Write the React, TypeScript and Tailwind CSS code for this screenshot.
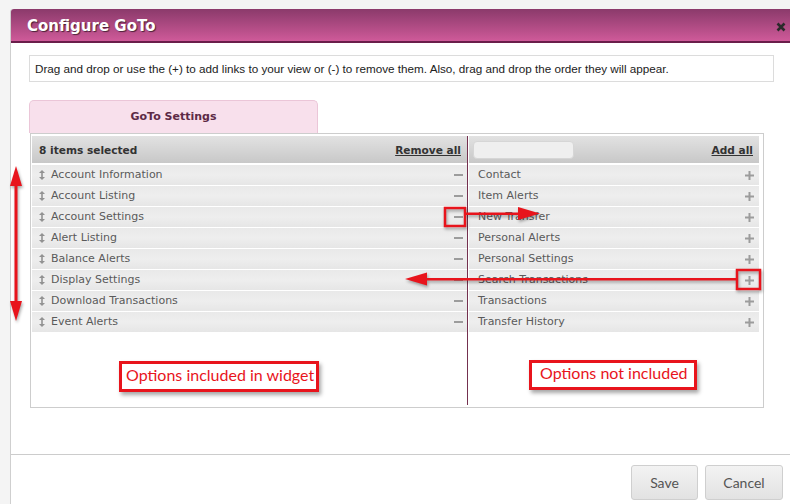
const selected = [
  "Account Information",
  "Account Listing",
  "Account Settings",
  "Alert Listing",
  "Balance Alerts",
  "Display Settings",
  "Download Transactions",
  "Event Alerts",
];

const available = [
  "Contact",
  "Item Alerts",
  "New Transfer",
  "Personal Alerts",
  "Personal Settings",
  "Search Transactions",
  "Transactions",
  "Transfer History",
];

function Handle() {
  return (
    <svg width="6" height="10" viewBox="0 0 6 10" className="shrink-0">
      <polygon points="3,0 0,3 6,3" fill="#929292" />
      <rect x="2.2" y="3" width="1.6" height="4" fill="#929292" />
      <polygon points="0,7 6,7 3,10" fill="#929292" />
    </svg>
  );
}

function Minus() {
  return <span className="block w-[9px] h-[2px] bg-[#9c9c9c]" />;
}

function Plus() {
  return (
    <svg width="9" height="9" viewBox="0 0 9 9">
      <rect x="0" y="3.5" width="9" height="2" fill="#9c9c9c" />
      <rect x="3.5" y="0" width="2" height="9" fill="#9c9c9c" />
    </svg>
  );
}

const row =
  "h-[20px] mb-[1px] flex items-center bg-gradient-to-b from-[#e9e9e9] via-[#eeeeee] to-[#e6e6e6] text-[11px] text-[#5a5a5a]";

function Callout({ children, className }: { children: string; className: string }) {
  return (
    <div
      className={`border-[3px] border-[#e8141c] shadow-[2px_3px_4px_rgba(0,0,0,0.35)] flex items-center pb-[4px] text-[16px] text-[#e8141c] font-['Lato',sans-serif] ${className}`}
    >
      {children}
    </div>
  );
}

function Annotations() {
  return (
    <svg
      width="790"
      height="504"
      className="absolute left-0 top-0 pointer-events-none"
      style={{ filter: "drop-shadow(1px 2px 1.5px rgba(0,0,0,0.35))" }}
    >
      {/* up/down reorder arrow */}
      <rect x="14.5" y="180" width="3" height="126" fill="#e8141c" />
      <polygon points="16,166 10,186 22,186" fill="#e8141c" />
      <polygon points="16,321 10,301 22,301" fill="#e8141c" />

      {/* remove: minus box -> right column */}
      <rect x="445" y="208" width="20" height="18" fill="none" stroke="#e8141c" strokeWidth="2.5" />
      <rect x="466" y="212.5" width="56" height="2.5" fill="#e8141c" />
      <polygon points="540,213.5 518,207 518,220" fill="#e8141c" />

      {/* add: plus box -> left column */}
      <rect x="737" y="270" width="23" height="19" fill="none" stroke="#e8141c" strokeWidth="2.5" />
      <rect x="424" y="278" width="313" height="2.5" fill="#e8141c" />
      <polygon points="405,279 427,272.5 427,285.5" fill="#e8141c" />
    </svg>
  );
}

export default function App() {
  return (
    <div className="relative w-[790px] h-[504px] overflow-hidden bg-[#f4f4f4] font-['DejaVu_Sans',Verdana,sans-serif]">
      <div className="ml-[10px] mt-[9px] w-[790px] h-[600px] bg-white border-l border-[#cfcfcf] rounded-tl-[3px]">
        {/* title bar */}
        <div className="h-[34px] flex items-center justify-between pt-[3px] pl-[16px] pr-[14px] bg-gradient-to-b from-[#8b3a6b] to-[#cf5a99] border-b-2 border-[#6a1d4a] rounded-tl-[3px]">
          <span className="text-white font-bold text-[15px] [text-shadow:1px_1px_1px_rgba(0,0,0,0.6)]">
            Configure GoTo
          </span>
          <svg width="10" height="10" viewBox="0 0 10 10">
            <path d="M1.5 1.5 L8.5 8.5 M8.5 1.5 L1.5 8.5" stroke="#2a2a2a" strokeWidth="2.6" />
          </svg>
        </div>

        <div className="pl-[18px]">
          <div className="mt-[12px] w-[745px] h-[27px] border border-[#dcdcdc] flex items-center pl-[5px] text-[11.7px] text-[#222] font-['Liberation_Sans',Arial,sans-serif]">
            Drag and drop or use the (+) to add links to your view or (-) to remove them. Also, drag and drop the order they will appear.
          </div>

          {/* tab */}
          <div className="mt-[18px] w-[289px] h-[33px] pt-[1px] rounded-t-[5px] bg-[#f8e0ec] border border-b-0 border-[#ebc6d8] flex items-center justify-center text-[11px] font-bold text-[#5c2a46]">
            GoTo Settings
          </div>

          {/* lists */}
          <div className="ml-[1px] w-[734px] h-[275px] border border-[#cdcdcd] pt-[2px] pl-[1px] pr-[4px] flex">
            <div className="w-[435px]">
              <div className="h-[27px] mb-[2px] flex items-center justify-between pt-[2px] pl-[7px] pr-[6px] bg-gradient-to-b from-[#e2e2e2] to-[#c8c8c8] text-[10.6px] font-bold text-[#333]">
                <span>8 items selected</span>
                <span className="underline">Remove all</span>
              </div>
              {selected.map((name) => (
                <div key={name} className={`${row} pl-[7px] pr-[4px]`}>
                  <Handle />
                  <span className="ml-[6px] flex-1">{name}</span>
                  <Minus />
                </div>
              ))}
              <Callout className="ml-[87px] mt-[29px] w-[200px] h-[31px] pl-[4px]">
                Options included in widget
              </Callout>
            </div>

            <div className="w-[1px] mb-[2px] bg-[#74304f]" />

            <div className="flex-1 pl-[1px]">
              <div className="h-[27px] mb-[2px] flex items-center justify-between pt-[1px] pl-[4px] pr-[6px] bg-gradient-to-b from-[#e2e2e2] to-[#c8c8c8] text-[10.6px] font-bold text-[#333]">
                <div className="w-[101px] h-[18px] rounded-[4px] bg-[#efefef] border border-[#d6d6d6]" />
                <span className="underline pt-[1px]">Add all</span>
              </div>
              {available.map((name) => (
                <div key={name} className={`${row} pl-[9px] pr-[5px]`}>
                  <span className="flex-1">{name}</span>
                  <Plus />
                </div>
              ))}
              <Callout className="ml-[60px] mt-[28px] w-[168px] h-[30px] pl-[8px]">
                Options not included
              </Callout>
            </div>
          </div>
        </div>

        {/* footer */}
        <div className="mt-[46px] border-t border-[#cccccc] pt-[10px] pr-[18px] flex justify-end gap-[7px] w-[790px]">
          {["Save", "Cancel"].map((label) => (
            <button
              key={label}
              className={`${label === "Save" ? "w-[67px]" : "w-[78px]"} h-[35px] rounded-[3px] border border-[#cfcfcf] bg-gradient-to-b from-[#f3f3f3] to-[#e2e2e2] text-[14px] text-[#555] font-['Lato',sans-serif]`}
            >
              {label}
            </button>
          ))}
        </div>
      </div>

      <Annotations />
    </div>
  );
}
